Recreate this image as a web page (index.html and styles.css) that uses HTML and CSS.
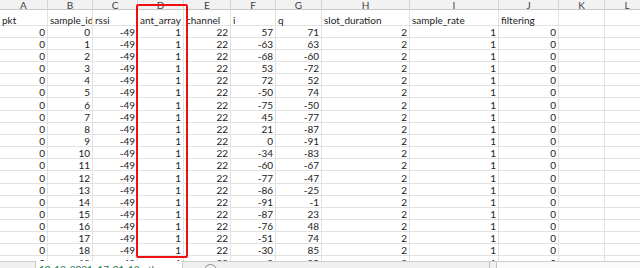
FILE: index.html
```html
<!DOCTYPE html>
<html>
<head>
<meta charset="utf-8">
<link rel="stylesheet" href="styles.css">
</head>
<body>
<div class="sheet">
  <div class="grid-wrap">
    <div class="grid" id="grid">
      <div class="ch">A</div><div class="ch">B</div><div class="ch">C</div><div class="ch">D</div><div class="ch">E</div><div class="ch">F</div><div class="ch">G</div><div class="ch">H</div><div class="ch">I</div><div class="ch">J</div><div class="ch">K</div><div class="ch">L</div>
      <div class="c t">pkt</div><div class="c t">sample_idx</div><div class="c t">rssi</div><div class="c t">ant_array</div><div class="c t">channel</div><div class="c t">i</div><div class="c t">q</div><div class="c t">slot_duration</div><div class="c t">sample_rate</div><div class="c t">filtering</div><div class="c"></div><div class="c"></div>
    </div>
    <div class="redbox"></div>
  </div>
  <div class="tabbar">
    <div class="tb-left"></div>
    <div class="tab">10-13-2021_17-01-13_rtls_raw_iq</div>
    <div class="tb-mid"><span class="addbtn"></span></div>
    <div class="tb-div"></div>
    <div class="tb-scroll"></div>
  </div>
</div>
<script>
  var iv=[57,-63,-68,53,72,-50,-75,45,21,0,-34,-60,-77,-86,-91,-87,-76,-51,-30,-8];
  var qv=[71,63,-60,-72,52,74,-50,-77,-87,-91,-83,-67,-47,-25,-1,23,48,74,85,90];
  var g=document.getElementById('grid');
  var html='';
  for(var k=0;k<20;k++){
    var vals=[0,k,-49,1,22,iv[k],qv[k],2,1,0];
    for(var j=0;j<vals.length;j++){ html+='<div class="c n">'+vals[j]+'</div>'; }
    html+='<div class="c"></div><div class="c"></div>';
  }
  g.insertAdjacentHTML('beforeend',html);
</script>
</body>
</html>
```
FILE: styles.css
```css
html, body {
  margin: 0;
  padding: 0;
  background: #ffffff;
}
.sheet {
  width: 640px;
  height: 268px;
  overflow: hidden;
  display: flex;
  flex-direction: column;
  font-family: Lato, "Liberation Sans", Arial, sans-serif;
}
.grid-wrap {
  position: relative;
  height: 261px;
  flex: none;
  overflow: hidden;
}
.grid {
  display: grid;
  grid-template-columns: 48px 45px 45px 46px 47px 45px 46px 88px 89px 60px 46px 45px;
  grid-template-rows: 10px 15.5px;
  grid-auto-rows: 12.17px;
  width: 650px;
}
.ch {
  box-sizing: border-box;
  background: #f2f2f2;
  border-right: 1px solid #d4d4d4;
  border-bottom: 1px solid #c8c8c8;
  color: #404040;
  font-size: 10px;
  line-height: 11px;
  text-align: center;
  overflow: hidden;
}
.c {
  box-sizing: border-box;
  border-right: 1px solid #e2e2e2;
  border-bottom: 1px solid #e2e2e2;
  font-size: 10px;
  line-height: 8px;
  color: #222222;
  white-space: nowrap;
  overflow-x: clip;
  overflow-y: visible;
  display: flex;
  align-items: flex-end;
  padding: 0 2px 1px 2px;
}
.c.n {
  justify-content: flex-end;
}
.c.t {
  justify-content: flex-start;
}
.redbox {
  position: absolute;
  left: 136px;
  top: 4px;
  width: 52px;
  height: 254px;
  box-sizing: border-box;
  border: 2px solid #f01010;
  border-radius: 2px;
}
.tabbar {
  flex: none;
  height: 20px;
  display: flex;
  background: #f0f0f0;
  border-top: 1px solid #cfcfcf;
  box-sizing: border-box;
}
.tb-left {
  width: 35px;
  flex: none;
}
.tab {
  width: 148px;
  flex: none;
  box-sizing: border-box;
  background: #ffffff;
  border-left: 1px solid #c8c8c8;
  border-right: 1px solid #c8c8c8;
  margin-top: -1px;
  color: #217346;
  font-size: 10px;
  line-height: 12px;
  padding: 2px 0 0 3px;
  white-space: nowrap;
  overflow: hidden;
}
.tb-mid {
  width: 306px;
  flex: none;
  position: relative;
}
.addbtn {
  position: absolute;
  left: 21px;
  top: 2px;
  width: 11px;
  height: 11px;
  border: 1px solid #8a8a8a;
  border-radius: 50%;
}
.tb-div {
  width: 8px;
  flex: none;
  border-left: 1px solid #c0c0c0;
  border-right: 1px solid #c0c0c0;
  box-sizing: border-box;
}
.tb-scroll {
  flex: 1;
  background: #fafafa;
}
```
